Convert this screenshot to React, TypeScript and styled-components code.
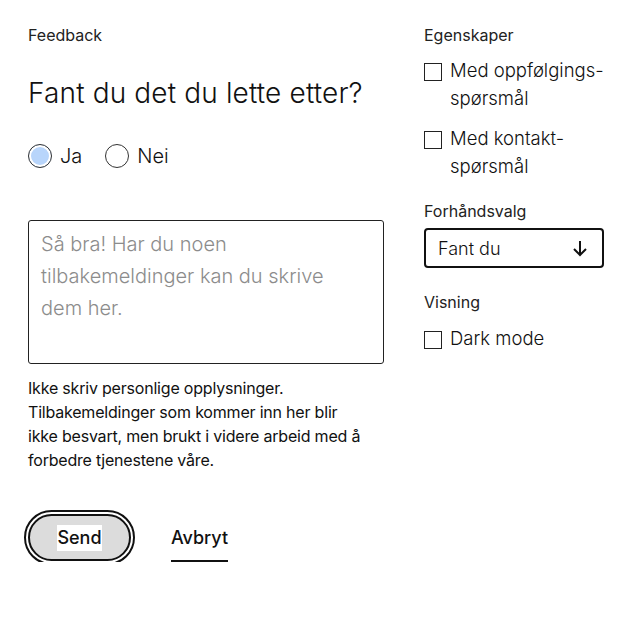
import React from "react";
import styled, { createGlobalStyle } from "styled-components";

const Global = createGlobalStyle`
  html, body { margin: 0; padding: 0; background: #fff; }
  body { font-family: Inter, "Liberation Sans", Arial, sans-serif; color: #111; }
  * { box-sizing: border-box; }
`;

const Page = styled.div`
  display: grid;
  grid-template-columns: 356px 180px;
  column-gap: 40px;
  padding: 23px 36px 0 28px;
`;

const Column = styled.div`
  display: flex;
  flex-direction: column;
`;

const SmallLabel = styled.div<{ $mt?: number }>`
  font-size: 16px;
  line-height: 24px;
  color: #222;
  margin-top: ${(p) => p.$mt ?? 0}px;
`;

const Heading = styled.h1`
  margin: 28px 0 0;
  font-size: 28px;
  font-weight: 300;
  letter-spacing: 0.15px;
  line-height: 36px;
  color: #111;
`;

const RadioRow = styled.div`
  display: flex;
  align-items: center;
  gap: 23px;
  margin-top: 31px;
  height: 28px;
`;

const RadioItem = styled.label`
  display: flex;
  align-items: center;
  gap: 8px;
  font-size: 20px;
  font-weight: 300;
  line-height: 28px;
`;

const RadioCircle = styled.span<{ $checked?: boolean }>`
  width: 24px;
  height: 24px;
  border-radius: 50%;
  border: 1.5px solid #333;
  background: ${(p) => (p.$checked ? "#b8d5fb" : "#fff")};
  box-shadow: ${(p) => (p.$checked ? "inset 0 0 0 2px #fff" : "none")};
`;

const TextArea = styled.div`
  margin-top: 50px;
  height: 144px;
  border: 1px solid #222;
  border-radius: 3px;
  padding: 7px 12px;
  font-size: 20px;
  font-weight: 300;
  line-height: 32px;
  color: #8c8c8c;
`;

const Help = styled.p`
  margin: 12px 0 0;
  font-size: 16px;
  line-height: 24px;
  letter-spacing: -0.2px;
  color: #111;
`;

const Actions = styled.div`
  display: flex;
  align-items: center;
  gap: 40px;
  margin-top: 41px;
`;

const SendButton = styled.button`
  width: 103px;
  height: 47px;
  border-radius: 24px;
  border: 2px solid #111;
  background: #dcdcdc;
  outline: 2px solid #111;
  outline-offset: 2px;
  font-family: inherit;
  font-size: 18px;
  font-weight: 500;
  color: #111;
  display: flex;
  align-items: center;
  justify-content: center;
  padding: 0;
`;

const SendText = styled.span`
  background: #fff;
  padding: 1px 0;
  line-height: 24px;
`;

const CancelLink = styled.span`
  display: flex;
  align-items: center;
  height: 49px;
  padding-top: 2px;
  border-bottom: 2px solid #111;
  font-size: 18px;
  font-weight: 500;
  color: #111;
`;

const CheckItem = styled.label<{ $mt: number }>`
  display: flex;
  align-items: flex-start;
  gap: 8px;
  margin-top: ${(p) => p.$mt}px;
  font-size: 18.5px;
  font-weight: 300;
  line-height: 28px;
  color: #111;
  white-space: nowrap;
`;

const Box = styled.span`
  flex: none;
  width: 18px;
  height: 18px;
  margin-top: 7px;
  border: 1.5px solid #222;
  background: #fff;
`;

const Select = styled.div`
  margin-top: 5px;
  height: 40px;
  border: 2px solid #111;
  border-radius: 4px;
  padding: 0 14px 0 12px;
  display: flex;
  align-items: center;
  justify-content: space-between;
  font-size: 18px;
  font-weight: 300;
  color: #111;
`;

const ArrowDown = () => (
  <svg width="16" height="18" viewBox="0 0 16 18" fill="none" stroke="#111" strokeWidth="2">
    <line x1="8" y1="2" x2="8" y2="16" />
    <polyline points="2,10 8,16 14,10" />
  </svg>
);

export default function App() {
  return (
    <>
      <Global />
      <Page>
        <Column>
          <SmallLabel>Feedback</SmallLabel>
          <Heading>Fant du det du lette etter?</Heading>
          <RadioRow>
            <RadioItem>
              <RadioCircle $checked />
              Ja
            </RadioItem>
            <RadioItem>
              <RadioCircle />
              Nei
            </RadioItem>
          </RadioRow>
          <TextArea>
            Så bra! Har du noen
            <br />
            tilbakemeldinger kan du skrive
            <br />
            dem her.
          </TextArea>
          <Help>
            Ikke skriv personlige opplysninger.
            <br />
            Tilbakemeldinger som kommer inn her blir
            <br />
            ikke besvart, men brukt i videre arbeid med å
            <br />
            forbedre tjenestene våre.
          </Help>
          <Actions>
            <SendButton>
              <SendText>Send</SendText>
            </SendButton>
            <CancelLink>Avbryt</CancelLink>
          </Actions>
        </Column>
        <Column>
          <SmallLabel>Egenskaper</SmallLabel>
          <CheckItem $mt={9}>
            <Box />
            <span>
              Med oppfølgings-
              <br />
              spørsmål
            </span>
          </CheckItem>
          <CheckItem $mt={12}>
            <Box />
            <span>
              Med kontakt-
              <br />
              spørsmål
            </span>
          </CheckItem>
          <SmallLabel $mt={19}>Forhåndsvalg</SmallLabel>
          <Select>
            <span>Fant du</span>
            <ArrowDown />
          </Select>
          <SmallLabel $mt={22}>Visning</SmallLabel>
          <CheckItem $mt={10}>
            <Box />
            <span>Dark mode</span>
          </CheckItem>
        </Column>
      </Page>
    </>
  );
}
